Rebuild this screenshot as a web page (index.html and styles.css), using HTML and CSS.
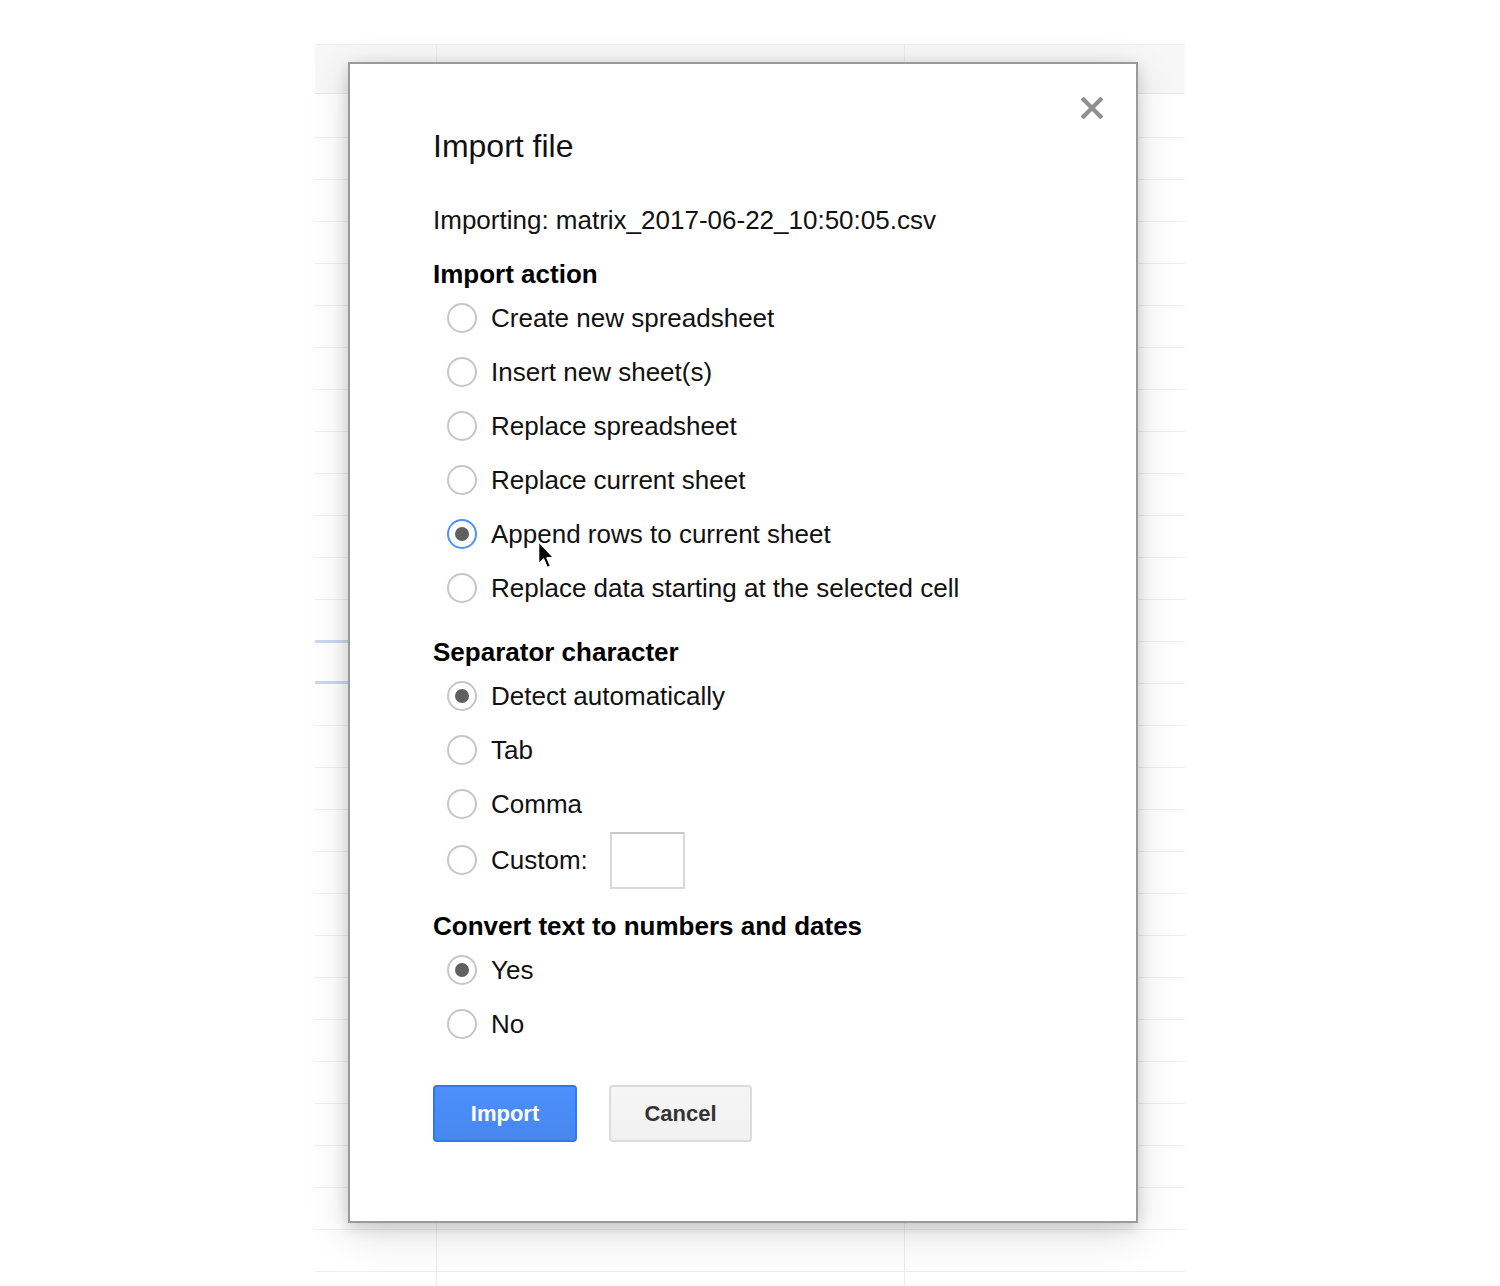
FILE: index.html
```html
<!DOCTYPE html>
<html>
<head>
<meta charset="utf-8">
<title>Import file</title>
<link rel="stylesheet" href="styles.css">
</head>
<body>
<div class="sheet">
  <div class="sheet-head">
    <div class="hcol c1"></div>
    <div class="hcol c2"></div>
    <div class="hcol c3"></div>
  </div>
  <div class="sheet-body">
    <div class="col c1"><div class="sel-row"></div></div>
    <div class="col c2"></div>
    <div class="col c3"></div>
  </div>
</div>

<div class="dialog">
  <svg class="close" viewBox="0 0 22 22" width="22" height="22"><path d="M2.5 2.5 L19.5 19.5 M19.5 2.5 L2.5 19.5" stroke="#8f8f8f" stroke-width="4.2" stroke-linecap="square"/></svg>
  <h1 class="title">Import file</h1>
  <div class="importing">Importing: matrix_2017-06-22_10:50:05.csv</div>

  <div class="section-title first">Import action</div>
  <div class="option"><span class="radio"></span><span class="label">Create new spreadsheet</span></div>
  <div class="option"><span class="radio"></span><span class="label">Insert new sheet(s)</span></div>
  <div class="option"><span class="radio"></span><span class="label">Replace spreadsheet</span></div>
  <div class="option"><span class="radio"></span><span class="label">Replace current sheet</span></div>
  <div class="option"><span class="radio checked focused"></span><span class="label">Append rows to current sheet</span></div>
  <div class="option"><span class="radio"></span><span class="label">Replace data starting at the selected cell</span></div>

  <div class="section-title">Separator character</div>
  <div class="option"><span class="radio checked"></span><span class="label">Detect automatically</span></div>
  <div class="option"><span class="radio"></span><span class="label">Tab</span></div>
  <div class="option"><span class="radio"></span><span class="label">Comma</span></div>
  <div class="option custom"><span class="radio"></span><span class="label">Custom:</span><span class="custom-input"></span></div>

  <div class="section-title">Convert text to numbers and dates</div>
  <div class="option"><span class="radio checked"></span><span class="label">Yes</span></div>
  <div class="option"><span class="radio"></span><span class="label">No</span></div>

  <div class="buttons">
    <div class="btn btn-primary">Import</div>
    <div class="btn btn-default">Cancel</div>
  </div>
</div>

<svg class="cursor" viewBox="0 0 19 30" width="19" height="30"><path d="M1.5 1.5 L1.5 24 L6.6 19.2 L10.2 27.8 L13.6 26.3 L10.1 17.9 L17 17.9 Z" fill="#000" stroke="#fff" stroke-width="1.6" stroke-linejoin="round"/></svg>
</body>
</html>
```

FILE: styles.css
```css
html, body {
  margin: 0;
  padding: 0;
}

body {
  width: 1500px;
  height: 1286px;
  overflow: hidden;
  position: relative;
  background: #ffffff;
  font-family: "Liberation Sans", Arial, Helvetica, sans-serif;
  color: #111;
}

/* faded spreadsheet behind the dialog */
.sheet {
  width: 870px;
  margin-left: 315px;
  padding-top: 44px;
}

.sheet-head {
  display: flex;
  height: 50px;
  box-sizing: border-box;
  border-top: 1px solid #eeeeee;
  border-bottom: 1px solid #e9e9e9;
  background: #f7f7f7;
}

.sheet-body {
  display: flex;
  height: 1192px;
  background-image: repeating-linear-gradient(to bottom, transparent 0, transparent 41px, #efefef 41px, #efefef 42px);
  background-position: 0 2px;
}

.c1 { width: 121px; }
.c2 { width: 468px; border-left: 1px solid #ececec; }
.c3 { width: 281px; border-left: 1px solid #ececec; }
.hcol, .col { box-sizing: border-box; }

.sel-row {
  margin-top: 546px;
  height: 44px;
  box-sizing: border-box;
  border-top: 3px solid #c9d8ef;
  border-bottom: 3px solid #c9d8ef;
}

/* dialog */
.dialog {
  position: absolute;
  left: 348px;
  top: 62px;
  width: 790px;
  height: 1161px;
  box-sizing: border-box;
  border: 2px solid #9a9a9a;
  background: #ffffff;
  padding: 62px 83px 0 83px;
  box-shadow: 0 4px 14px rgba(0, 0, 0, 0.16), 0 12px 40px rgba(0, 0, 0, 0.12);
}

.close {
  position: absolute;
  top: 33px;
  right: 33px;
  display: block;
}

.title {
  margin: 0;
  font-size: 32px;
  line-height: 40px;
  font-weight: normal;
  color: #111;
}

.importing {
  margin-top: 38px;
  font-size: 26px;
  line-height: 32px;
}

.section-title {
  margin-top: 21px;
  margin-bottom: 1px;
  font-size: 26px;
  line-height: 32px;
  font-weight: bold;
  color: #000;
}

.section-title.first {
  margin-top: 22px;
  margin-bottom: 1px;
}

.option {
  display: flex;
  align-items: center;
  height: 54px;
  padding-left: 14px;
  font-size: 26px;
  line-height: 32px;
}

.option.custom {
  height: 58px;
}

.radio {
  position: relative;
  flex: none;
  width: 30px;
  height: 30px;
  box-sizing: border-box;
  border: 2px solid #c6c6c6;
  border-radius: 50%;
  background: #fff;
  margin-right: 14px;
}

.radio.checked::after {
  content: "";
  position: absolute;
  left: 6px;
  top: 6px;
  width: 14px;
  height: 14px;
  border-radius: 50%;
  background: #606060;
}

.radio.focused {
  border-color: #4d90fe;
}

.custom-input {
  width: 75px;
  height: 57px;
  box-sizing: border-box;
  margin-left: 22px;
  border: 2px solid #d9d9d9;
  border-top-color: #c8c8c8;
  background: #fff;
}

.buttons {
  display: flex;
  gap: 32px;
  margin-top: 34px;
}

.btn {
  display: flex;
  align-items: center;
  justify-content: center;
  height: 57px;
  box-sizing: border-box;
  border-radius: 4px;
  font-size: 22px;
  font-weight: bold;
}

.btn-primary {
  width: 144px;
  color: #fff;
  background: linear-gradient(to bottom, #4d90fe, #4787ed);
  border: 2px solid #3079ed;
}

.btn-default {
  width: 143px;
  color: #333;
  background: linear-gradient(to bottom, #f5f5f5, #f1f1f1);
  border: 2px solid #dcdcdc;
}

.cursor {
  position: absolute;
  left: 537px;
  top: 540px;
  display: block;
}
```
